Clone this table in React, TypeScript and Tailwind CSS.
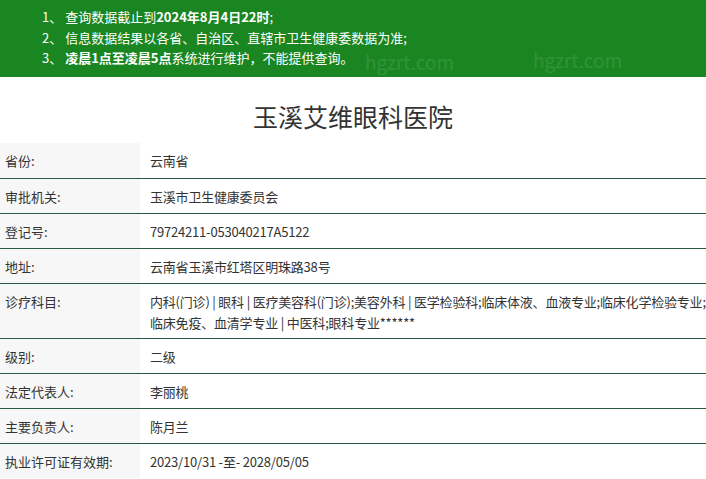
import React from "react";

const rows: { label: string; value: React.ReactNode; tall?: boolean }[] = [
  { label: "省份:", value: "云南省" },
  { label: "审批机关:", value: "玉溪市卫生健康委员会" },
  { label: "登记号:", value: "79724211-053040217A5122" },
  { label: "地址:", value: "云南省玉溪市红塔区明珠路38号" },
  {
    label: "诊疗科目:",
    value: (
      <>
        内科(门诊) | 眼科 | 医疗美容科(门诊);美容外科 | 医学检验科;临床体液、血液专业;临床化学检验专业;
        <br />
        临床免疫、血清学专业 | 中医科;眼科专业******
      </>
    ),
    tall: true,
  },
  { label: "级别:", value: "二级" },
  { label: "法定代表人:", value: "李丽桃" },
  { label: "主要负责人:", value: "陈月兰" },
  { label: "执业许可证有效期:", value: "2023/10/31 -至- 2028/05/05" },
];

export default function App() {
  return (
    <div
      className="w-[706px] h-[479px] overflow-hidden bg-white text-[#333]"
      style={{ fontFamily: '"Noto Sans CJK SC", "Noto Sans", sans-serif' }}
    >
      {/* notice banner */}
      <div className="relative h-[77px] bg-[#1a8621] text-white text-[13px] leading-[20.5px] pl-[42px] pt-[7px] overflow-hidden">
        <p>
          1、 查询数据截止到<b>2024年8月4日22时</b>;
        </p>
        <p>2、 信息数据结果以各省、自治区、直辖市卫生健康委数据为准;</p>
        <p>
          3、 <b>凌晨1点至凌晨5点</b>系统进行维护，不能提供查询。
        </p>
        <span className="absolute left-[365px] top-[50px] text-[19px] leading-[24px] text-white/10">hgzrt.com</span>
        <span className="absolute left-[533px] top-[48px] text-[19px] leading-[24px] text-white/10">hgzrt.com</span>
      </div>

      <h1 className="h-[66px] pt-[12px] text-center text-[25px] leading-[54px] text-[#333]">玉溪艾维眼科医院</h1>

      <div className="text-[13px] leading-[21px]">
        {rows.map((r, i) => (
          <div
            key={r.label}
            className={`flex ${i > 0 ? "border-t border-[#2c5a41]" : ""} ${r.tall ? "h-[55px]" : "h-[35px]"}`}
          >
            <div className="w-[140px] shrink-0 bg-[#f7f7f7] pl-[5px] pt-[7px]">{r.label}</div>
            <div className="flex-1 pl-[10px] pt-[7px] whitespace-nowrap tracking-[-0.2px] text-[#333]">{r.value}</div>
          </div>
        ))}
      </div>
    </div>
  );
}
